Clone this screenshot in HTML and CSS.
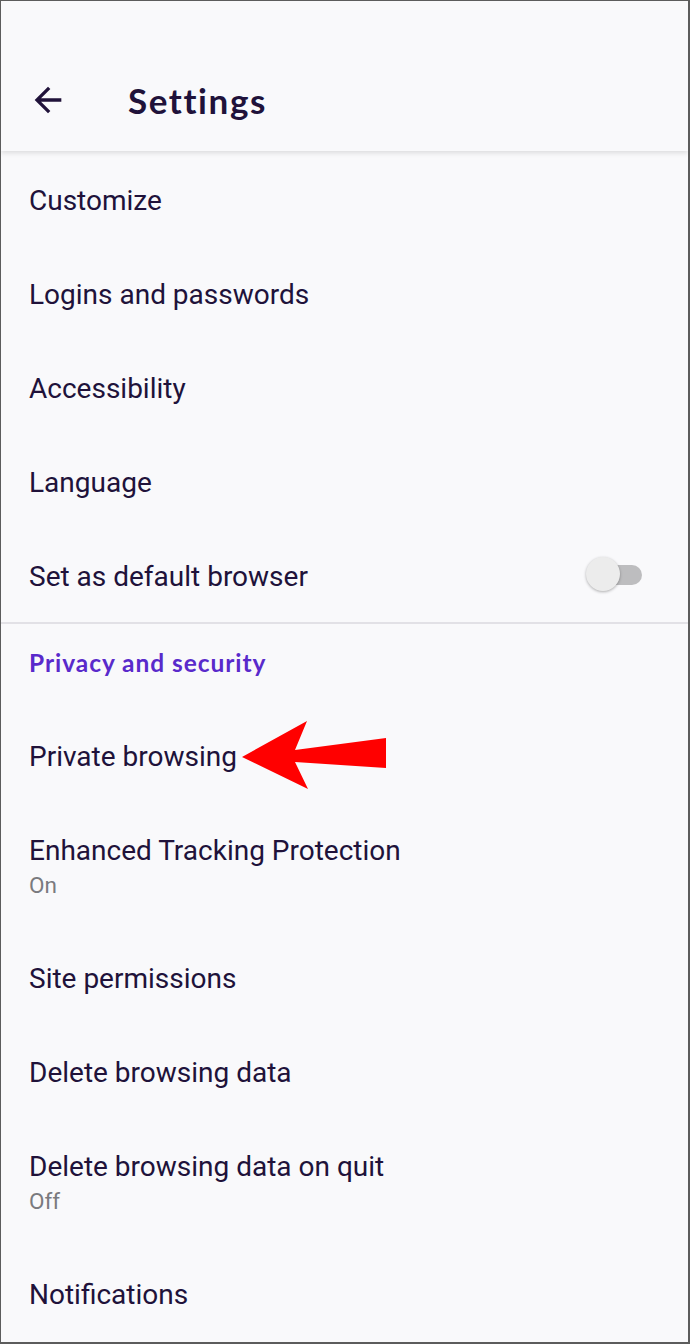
FILE: index.html
```html
<!DOCTYPE html>
<html>
<head>
<meta charset="utf-8">
<link rel="stylesheet" href="styles.css">
</head>
<body>
<div class="frame">
  <header class="appbar">
    <svg class="back" viewBox="0 0 24 24" width="40" height="40"><path d="M20 11H7.83l5.59-5.59L12 4l-8 8 8 8 1.41-1.41L7.83 13H20v-2z" fill="#20123a"/></svg>
    <h1 class="title">Settings</h1>
  </header>
  <main class="list">
    <div class="group">
      <div class="row"><span class="label">Customize</span></div>
      <div class="row"><span class="label">Logins and passwords</span></div>
      <div class="row"><span class="label">Accessibility</span></div>
      <div class="row"><span class="label">Language</span></div>
      <div class="row"><span class="label">Set as default browser</span>
        <span class="switch"><span class="track"></span><span class="thumb"></span></span>
      </div>
    </div>
    <div class="group sep">
      <div class="category">Privacy and security</div>
      <div class="row"><span class="label">Private browsing</span></div>
      <div class="row tall"><span class="label">Enhanced Tracking Protection</span><span class="sub">On</span></div>
      <div class="row"><span class="label">Site permissions</span></div>
      <div class="row"><span class="label">Delete browsing data</span></div>
      <div class="row tall"><span class="label">Delete browsing data on quit</span><span class="sub">Off</span></div>
      <div class="row"><span class="label">Notifications</span></div>
    </div>
  </main>
  <svg class="pointer" width="690" height="1344" viewBox="0 0 690 1344"><polygon points="242,757 307,721 295,750 386,738 386,768 295,762 308,789" fill="#ff0000"/></svg>
</div>
</body>
</html>
```
FILE: styles.css
```css
html, body {
  margin: 0;
  padding: 0;
  background: #f9f9fb;
}
.frame {
  position: relative;
  box-sizing: border-box;
  width: 690px;
  height: 1344px;
  border-style: solid;
  border-color: #5c5c5c;
  border-width: 1px 2px 2px 1px;
  background: #f9f9fb;
  overflow: hidden;
  font-family: Roboto, "Liberation Sans", sans-serif;
  color: #20123a;
}
.appbar {
  height: 150px;
  display: flex;
  align-items: center;
  padding: 48px 0 0 27px;
  box-sizing: border-box;
  background: #f9f9fb;
  box-shadow: 0 2px 5px rgba(0, 0, 0, 0.12);
  position: relative;
  z-index: 1;
}
.back {
  display: block;
}
.title {
  margin: 0 0 0 60px;
  font-family: Lato, "Open Sans", sans-serif;
  font-weight: 700;
  font-size: 35px;
  letter-spacing: 1.6px;
  color: #20123a;
  line-height: 40px;
}
.list {
  padding-top: 1px;
}
.group.sep {
  border-top: 2px solid #e2e1e6;
}
.row {
  box-sizing: border-box;
  height: 94px;
  display: flex;
  flex-direction: column;
  justify-content: center;
  padding: 3px 28px 0;
  position: relative;
}
.row.tall {
  height: 128px;
  padding-top: 1px;
}
.label {
  font-size: 28px;
  line-height: 36px;
}
.sub {
  font-size: 22.5px;
  line-height: 32px;
  color: #7a7a7e;
}
.category {
  height: 84px;
  box-sizing: border-box;
  padding: 21px 28px 0;
  font-family: Lato, "Open Sans", sans-serif;
  font-weight: 700;
  font-size: 24.5px;
  line-height: 36px;
  color: #592acb;
  letter-spacing: 0.95px;
}
.switch {
  position: absolute;
  right: 46px;
  top: 29px;
  width: 56px;
  height: 36px;
}
.track {
  position: absolute;
  right: 0;
  top: 8px;
  width: 46px;
  height: 20px;
  border-radius: 10px;
  background: #bdbdbf;
}
.thumb {
  position: absolute;
  left: 0;
  top: 0;
  width: 34px;
  height: 34px;
  border-radius: 50%;
  background: #ececec;
  box-shadow: 0 1px 3px rgba(0, 0, 0, 0.3);
}
.pointer {
  position: absolute;
  left: -1px;
  top: -1px;
  pointer-events: none;
  z-index: 2;
}
```
